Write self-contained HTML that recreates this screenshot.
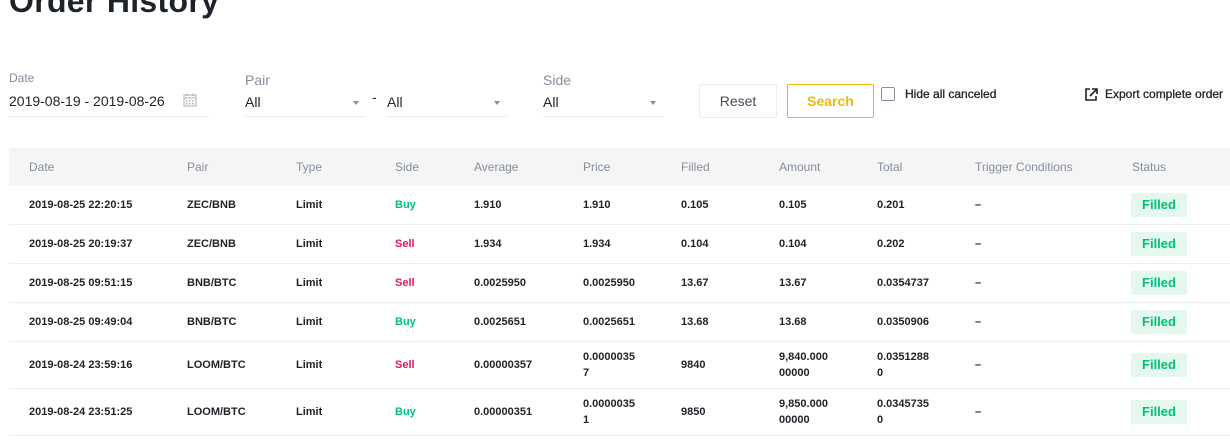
<!DOCTYPE html>
<html><head><meta charset="utf-8"><style>
*{margin:0;padding:0;box-sizing:border-box}
body{width:1230px;height:440px;overflow:hidden;background:#fff;font-family:"Liberation Sans",sans-serif;color:#1e2329;position:relative}
.a{position:absolute;white-space:nowrap}
h1{position:absolute;left:9px;top:-17px;font-size:32px;font-weight:700;color:#1e2329;letter-spacing:0.3px}
.lbl{color:#848e9c;font-size:12px}
.lbl2{color:#848e9c;font-size:14px}
.val{font-size:14px;color:#1e2329}
.ul{position:absolute;height:1px;background:#eaecef}
.caret{position:absolute;width:0;height:0;border-left:3.5px solid transparent;border-right:3.5px solid transparent;border-top:4px solid #848e9c}
.hdr{position:absolute;left:9px;top:148px;width:1221px;height:38px;background:#f5f5f5}
.th{position:absolute;top:160px;font-size:12px;color:#848e9c}
.td{position:absolute;font-size:11px;font-weight:700;color:#1e2329;line-height:16px}
.line{position:absolute;left:9px;width:1221px;height:1px;background:#eeeeee}
.buy{color:#02c076}.sell{color:#e0185e}
.badge{position:absolute;left:1131px;width:56px;height:24px;background:#e5f8ef;color:#02c076;border-radius:2px;font-size:13px;font-weight:700;text-align:center;line-height:24px}
</style></head><body>
<h1>Order History</h1>

<div class="a lbl" style="left:9px;top:71px">Date</div>
<div class="a val" style="left:9px;top:93px">2019-08-19 - 2019-08-26</div>
<svg class="a" style="left:183px;top:93px" width="14" height="14" viewBox="0 0 14 14"><rect x="1" y="2" width="12" height="11" fill="none" stroke="#aab0b8"/><line x1="1" y1="5" x2="13" y2="5" stroke="#aab0b8"/><line x1="4" y1="0.5" x2="4" y2="3" stroke="#aab0b8"/><line x1="10" y1="0.5" x2="10" y2="3" stroke="#aab0b8"/><g fill="#aab0b8"><rect x="3" y="7" width="1.5" height="1.5"/><rect x="6" y="7" width="1.5" height="1.5"/><rect x="9" y="7" width="1.5" height="1.5"/><rect x="3" y="10" width="1.5" height="1.5"/><rect x="6" y="10" width="1.5" height="1.5"/><rect x="9" y="10" width="1.5" height="1.5"/></g></svg>
<div class="ul" style="left:9px;top:116px;width:200px"></div>

<div class="a lbl2" style="left:245px;top:72px">Pair</div>
<div class="a val" style="left:245px;top:94px">All</div>
<div class="caret" style="left:353px;top:101px"></div>
<div class="ul" style="left:245px;top:116px;width:120px"></div>
<div class="a val" style="left:372px;top:89px">-</div>
<div class="a val" style="left:387px;top:94px">All</div>
<div class="caret" style="left:494px;top:101px"></div>
<div class="ul" style="left:387px;top:116px;width:120px"></div>

<div class="a lbl2" style="left:543px;top:72px">Side</div>
<div class="a val" style="left:543px;top:94px">All</div>
<div class="caret" style="left:650px;top:101px"></div>
<div class="ul" style="left:543px;top:116px;width:120px"></div>

<div class="a" style="left:699px;top:84px;width:78px;height:34px;border:1px solid #eaecef;border-radius:2px;text-align:center;line-height:32px;font-size:14px;color:#474d57">Reset</div>
<div class="a" style="left:787px;top:84px;width:87px;height:34px;border:1px solid #f0b90b;border-radius:2px;text-align:center;line-height:32px;font-size:14px;color:#f0b90b;font-weight:700">Search</div>
<div class="a" style="left:881px;top:87px;width:14px;height:14px;border:1px solid #848e9c;border-radius:2px"></div>
<div class="a" style="left:905px;top:87px;font-size:12px;color:#1e2329;-webkit-text-stroke:0.3px #1e2329">Hide all canceled</div>
<svg class="a" style="left:1084px;top:87px" width="15" height="15" viewBox="0 0 15 15"><path d="M6 2H2v11h10V9" fill="none" stroke="#1e2329" stroke-width="1.6"/><path d="M6 9l7-7M8 2h5v5" fill="none" stroke="#1e2329" stroke-width="1.6"/></svg>
<div class="a" style="left:1105px;top:87px;font-size:12px;color:#1e2329;-webkit-text-stroke:0.3px #1e2329">Export complete order</div>

<div class="hdr"></div>
<div class="th" style="left:29px">Date</div>
<div class="th" style="left:187px">Pair</div>
<div class="th" style="left:296px">Type</div>
<div class="th" style="left:395px">Side</div>
<div class="th" style="left:474px">Average</div>
<div class="th" style="left:583px">Price</div>
<div class="th" style="left:681px">Filled</div>
<div class="th" style="left:779px">Amount</div>
<div class="th" style="left:877px">Total</div>
<div class="th" style="left:975px">Trigger Conditions</div>
<div class="th" style="left:1132px">Status</div>

<div class="td" style="left:29px;top:197px">2019-08-25 22:20:15</div>
<div class="td" style="left:187px;top:197px">ZEC/BNB</div>
<div class="td" style="left:296px;top:197px">Limit</div>
<div class="td buy" style="left:395px;top:197px">Buy</div>
<div class="td" style="left:474px;top:197px">1.910</div>
<div class="td" style="left:583px;top:197px">1.910</div>
<div class="td" style="left:681px;top:197px">0.105</div>
<div class="td" style="left:779px;top:197px">0.105</div>
<div class="td" style="left:877px;top:197px">0.201</div>
<div class="td" style="left:975px;top:197px">–</div>
<div class="badge" style="top:193px">Filled</div>
<div class="line" style="top:224px"></div>

<div class="td" style="left:29px;top:236px">2019-08-25 20:19:37</div>
<div class="td" style="left:187px;top:236px">ZEC/BNB</div>
<div class="td" style="left:296px;top:236px">Limit</div>
<div class="td sell" style="left:395px;top:236px">Sell</div>
<div class="td" style="left:474px;top:236px">1.934</div>
<div class="td" style="left:583px;top:236px">1.934</div>
<div class="td" style="left:681px;top:236px">0.104</div>
<div class="td" style="left:779px;top:236px">0.104</div>
<div class="td" style="left:877px;top:236px">0.202</div>
<div class="td" style="left:975px;top:236px">–</div>
<div class="badge" style="top:232px">Filled</div>
<div class="line" style="top:263px"></div>

<div class="td" style="left:29px;top:275px">2019-08-25 09:51:15</div>
<div class="td" style="left:187px;top:275px">BNB/BTC</div>
<div class="td" style="left:296px;top:275px">Limit</div>
<div class="td sell" style="left:395px;top:275px">Sell</div>
<div class="td" style="left:474px;top:275px">0.0025950</div>
<div class="td" style="left:583px;top:275px">0.0025950</div>
<div class="td" style="left:681px;top:275px">13.67</div>
<div class="td" style="left:779px;top:275px">13.67</div>
<div class="td" style="left:877px;top:275px">0.0354737</div>
<div class="td" style="left:975px;top:275px">–</div>
<div class="badge" style="top:271px">Filled</div>
<div class="line" style="top:302px"></div>

<div class="td" style="left:29px;top:314px">2019-08-25 09:49:04</div>
<div class="td" style="left:187px;top:314px">BNB/BTC</div>
<div class="td" style="left:296px;top:314px">Limit</div>
<div class="td buy" style="left:395px;top:314px">Buy</div>
<div class="td" style="left:474px;top:314px">0.0025651</div>
<div class="td" style="left:583px;top:314px">0.0025651</div>
<div class="td" style="left:681px;top:314px">13.68</div>
<div class="td" style="left:779px;top:314px">13.68</div>
<div class="td" style="left:877px;top:314px">0.0350906</div>
<div class="td" style="left:975px;top:314px">–</div>
<div class="badge" style="top:310px">Filled</div>
<div class="line" style="top:341px"></div>

<div class="td" style="left:29px;top:357px">2019-08-24 23:59:16</div>
<div class="td" style="left:187px;top:357px">LOOM/BTC</div>
<div class="td" style="left:296px;top:357px">Limit</div>
<div class="td sell" style="left:395px;top:357px">Sell</div>
<div class="td" style="left:474px;top:357px">0.00000357</div>
<div class="td" style="left:583px;top:349px">0.0000035<br>7</div>
<div class="td" style="left:681px;top:357px">9840</div>
<div class="td" style="left:779px;top:349px">9,840.000<br>00000</div>
<div class="td" style="left:877px;top:349px">0.0351288<br>0</div>
<div class="td" style="left:975px;top:357px">–</div>
<div class="badge" style="top:353px">Filled</div>
<div class="line" style="top:388px"></div>

<div class="td" style="left:29px;top:404px">2019-08-24 23:51:25</div>
<div class="td" style="left:187px;top:404px">LOOM/BTC</div>
<div class="td" style="left:296px;top:404px">Limit</div>
<div class="td buy" style="left:395px;top:404px">Buy</div>
<div class="td" style="left:474px;top:404px">0.00000351</div>
<div class="td" style="left:583px;top:396px">0.0000035<br>1</div>
<div class="td" style="left:681px;top:404px">9850</div>
<div class="td" style="left:779px;top:396px">9,850.000<br>00000</div>
<div class="td" style="left:877px;top:396px">0.0345735<br>0</div>
<div class="td" style="left:975px;top:404px">–</div>
<div class="badge" style="top:400px">Filled</div>
<div class="line" style="top:435px"></div>
</body></html>
